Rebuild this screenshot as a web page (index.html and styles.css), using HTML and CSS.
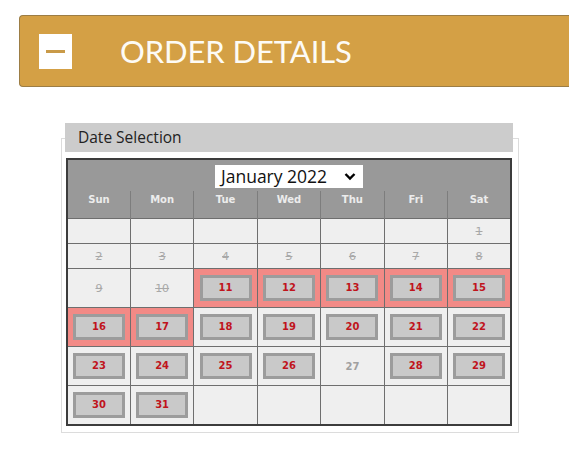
FILE: index.html
```html
<!DOCTYPE html>
<html>
<head>
<meta charset="utf-8">
<link rel="stylesheet" href="styles.css">
</head>
<body>
<div class="order-bar">
  <span class="toggle"><svg width="33" height="35" viewBox="0 0 33 35"><rect width="33" height="35" fill="#ffffff"/><rect x="7" y="16" width="19" height="3" fill="#c99a48"/></svg></span>
  <span class="order-title">ORDER DETAILS</span>
</div>

<div class="panel">
  <div class="panel-title">Date Selection</div>
  <table class="cal">
    <tr class="cal-top">
      <td colspan="7"><div class="month-select"><span>January 2022</span><svg width="12" height="9" viewBox="0 0 12 9"><path d="M1.5 2 L6 6.5 L10.5 2" fill="none" stroke="#000" stroke-width="2.4"/></svg></div></td>
    </tr>
    <tr class="cal-head">
      <th>Sun</th><th>Mon</th><th>Tue</th><th>Wed</th><th>Thu</th><th>Fri</th><th>Sat</th>
    </tr>
    <tr class="short">
      <td></td><td></td><td></td><td></td><td></td><td></td><td class="off">1</td>
    </tr>
    <tr class="short">
      <td class="off">2</td><td class="off">3</td><td class="off">4</td><td class="off">5</td><td class="off">6</td><td class="off">7</td><td class="off">8</td>
    </tr>
    <tr class="week">
      <td class="off">9</td><td class="off">10</td>
      <td class="hl"><span class="day">11</span></td>
      <td class="hl"><span class="day">12</span></td>
      <td class="hl"><span class="day">13</span></td>
      <td class="hl"><span class="day">14</span></td>
      <td class="hl"><span class="day">15</span></td>
    </tr>
    <tr class="week">
      <td class="hl"><span class="day">16</span></td>
      <td class="hl"><span class="day">17</span></td>
      <td><span class="day">18</span></td>
      <td><span class="day">19</span></td>
      <td><span class="day">20</span></td>
      <td><span class="day">21</span></td>
      <td><span class="day">22</span></td>
    </tr>
    <tr class="week">
      <td><span class="day">23</span></td>
      <td><span class="day">24</span></td>
      <td><span class="day">25</span></td>
      <td><span class="day">26</span></td>
      <td class="na">27</td>
      <td><span class="day">28</span></td>
      <td><span class="day">29</span></td>
    </tr>
    <tr class="week">
      <td><span class="day">30</span></td>
      <td><span class="day">31</span></td>
      <td></td><td></td><td></td><td></td><td></td>
    </tr>
  </table>
</div>
</body>
</html>
```

FILE: styles.css
```css
html, body {
  margin: 0;
  padding: 0;
  background: #ffffff;
  overflow: hidden;
}

body {
  width: 569px;
  height: 460px;
}

.order-bar {
  display: flex;
  align-items: center;
  box-sizing: border-box;
  height: 72px;
  margin: 15px 0 0 19px;
  background: #d4a045;
  border: 1px solid #9c7d45;
  border-right: none;
  border-radius: 4px 0 0 4px;
  padding-left: 19px;
}

.toggle {
  display: flex;
  width: 33px;
  height: 35px;
}

.order-title {
  margin-left: 48px;
  font-family: Lato, "Liberation Sans", sans-serif;
  font-size: 31px;
  color: #fdfbf5;
  letter-spacing: -0.1px;
}

.panel {
  box-sizing: border-box;
  width: 458px;
  margin: 51px 0 0 61px;
  border: 1px solid #dcdcdc;
  padding: 0 5px 6px 3px;
}

.panel-title {
  margin-top: -16px;
  height: 29px;
  line-height: 29px;
  background: #cccccc;
  padding-left: 13px;
  font-family: "Open Sans", "DejaVu Sans", sans-serif;
  font-size: 15.5px;
  color: #222222;
}

.cal {
  margin: 6px 0 0 1px;
  width: 446px;
  table-layout: fixed;
  border-collapse: collapse;
  border: 2px solid #3c3c3c;
  font-family: "DejaVu Sans", Verdana, sans-serif;
  background: #efefef;
}

.cal td, .cal th {
  padding: 0;
  text-align: center;
  vertical-align: middle;
  border: 1px solid #6e6e6e;
  font-size: 11px;
}

.cal tr.cal-top td {
  height: 26px;
  padding-top: 5px;
  line-height: 0;
  background: #999999;
  border: none;
  vertical-align: top;
}

.month-select {
  display: inline-flex;
  align-items: center;
  justify-content: space-between;
  box-sizing: border-box;
  width: 148px;
  height: 23px;
  padding: 0 7px 0 6px;
  background: #ffffff;
  font-family: "Open Sans", "DejaVu Sans", sans-serif;
  font-size: 17.5px;
  line-height: 23px;
  color: #111111;
  vertical-align: top;
}

.cal tr.cal-head th {
  height: 25px;
  line-height: 14px;
  background: #999999;
  color: #ececec;
  font-size: 10px;
  font-weight: bold;
  border-top: none;
  border-bottom: none;
  border-color: #7d7d7d;
  vertical-align: top;
  padding-top: 2px;
}

.cal tr.short td {
  height: 24px;
}

.cal tr.week td {
  height: 38px;
}

.cal td.off {
  color: #a8a8a8;
  text-decoration: line-through;
}

.cal td.na {
  color: #a0a0a0;
  font-weight: bold;
  font-size: 10px;
}

.cal td.hl {
  background: #f28a86;
}

.day {
  display: block;
  box-sizing: border-box;
  width: 52px;
  height: 26px;
  margin: 0 auto;
  line-height: 20px;
  background: #c9c9c9;
  border: 3px solid #9c9c9c;
  color: #c0141c;
  font-size: 10px;
  font-weight: bold;
}
```
